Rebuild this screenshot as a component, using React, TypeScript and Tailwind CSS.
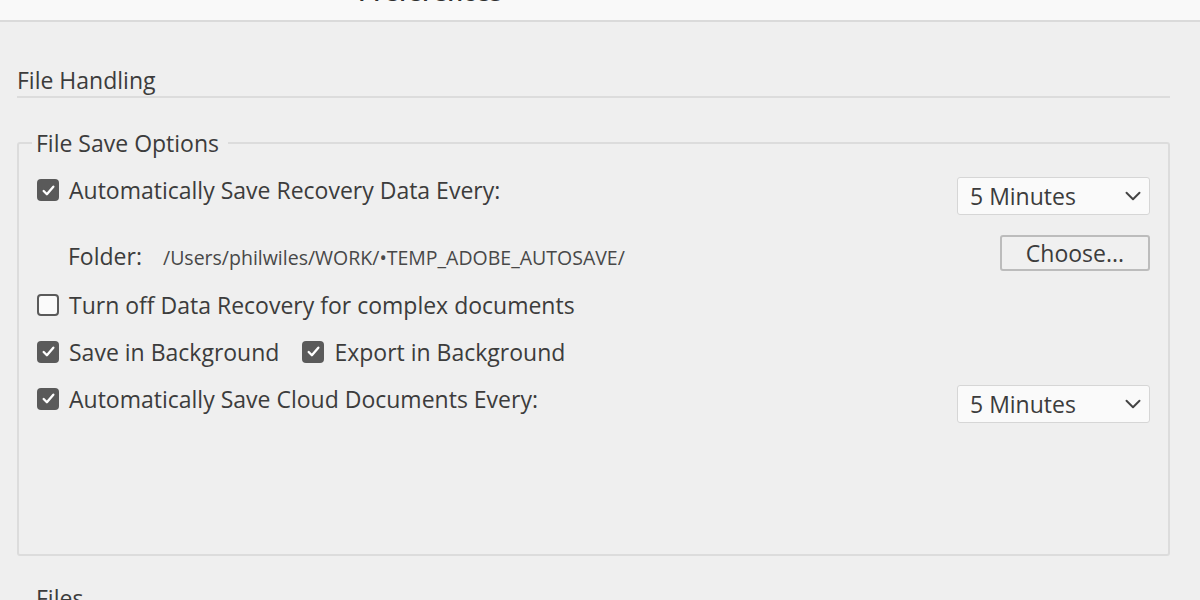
import { ChevronDown } from 'lucide-react';

const font = { fontFamily: '"Open Sans", "Liberation Sans", sans-serif' };

function Check({ on }: { on: boolean }) {
  if (!on) {
    return <span className="w-[22px] h-[22px] rounded-[4px] border-2 border-[#5a5a5a] bg-[#fafafa] shrink-0" />;
  }
  return (
    <span className="w-[22px] h-[22px] rounded-[4px] bg-[#5a5a5a] flex items-center justify-center shrink-0">
      <svg width="15" height="15" viewBox="0 0 14 14" fill="none">
        <path d="M2.5 7.5 L5.5 10.5 L11.5 3.5" stroke="#fff" strokeWidth="2.2" strokeLinecap="round" strokeLinejoin="round" />
      </svg>
    </span>
  );
}

function Option({ on, label }: { on: boolean; label: string }) {
  return (
    <label className="flex items-center gap-[10px] h-[24px]">
      <Check on={on} />
      <span className="text-[23px] leading-[28px] text-[#3c3c3c] whitespace-nowrap">{label}</span>
    </label>
  );
}

function Select({ value }: { value: string }) {
  return (
    <div className="w-[193px] h-[38px] bg-[#fafafa] border border-[#d6d6d6] rounded-[3px] flex items-center justify-between pl-[12px] pr-[3px]">
      <span className="text-[23px] leading-[28px] text-[#3c3c3c]">{value}</span>
      <ChevronDown className="w-[26px] h-[26px] text-[#444]" strokeWidth={1.8} />
    </div>
  );
}

export default function App() {
  return (
    <div className="w-[1200px] h-[600px] overflow-hidden bg-[#efefef]" style={font}>
      {/* window title bar, scrolled off the top */}
      <div className="h-[22px] bg-[#f9f9f9] border-b-2 border-[#dadada] overflow-hidden flex pl-[358px]">
        <span className="text-[25px] leading-[30px] -mt-[24px] text-[#2e2e2e] font-semibold">Preferences</span>
      </div>

      <div className="pl-[17px] pr-[30px]">
        <h2 className="mt-[44px] text-[23px] leading-[28px] text-[#3c3c3c]">File Handling</h2>
        <div className="mt-[2px] border-b-2 border-[#dcdcdc]" />

        <fieldset className="mt-[31px] h-[427px] border-2 border-[#dcdcdc] rounded-[3px]">
          <legend className="ml-[13px] pl-[4px] pr-[9px] text-[23px] leading-[28px] text-[#3c3c3c]">File Save Options</legend>

          <div className="px-[18px]">
            <div className="mt-[20px] flex justify-between items-start">
              <div className="mt-[1px]">
                <Option on label="Automatically Save Recovery Data Every:" />
              </div>
              <Select value="5 Minutes" />
            </div>

            <div className="mt-[18px] flex justify-between items-center">
              <div className="flex items-baseline pl-[31px] pt-[6px] text-[#3c3c3c]">
                <span className="text-[23px] w-[95px]">Folder:</span>
                <span className="text-[19.5px] text-[#484848]">/Users/philwiles/WORK/•TEMP_ADOBE_AUTOSAVE/</span>
              </div>
              <button className="w-[150px] h-[36px] border-2 border-[#bcbcbc] rounded-[3px] bg-[#f0f0f0] text-[23px] leading-[28px] text-[#3c3c3c]">
                Choose...
              </button>
            </div>

            <div className="mt-[19px]">
              <Option on={false} label="Turn off Data Recovery for complex documents" />
            </div>

            <div className="mt-[23px] flex gap-[23px]">
              <Option on label="Save in Background" />
              <Option on label="Export in Background" />
            </div>

            <div className="mt-[21px] flex justify-between items-start">
              <div className="mt-[2px]">
                <Option on label="Automatically Save Cloud Documents Every:" />
              </div>
              <Select value="5 Minutes" />
            </div>
          </div>
        </fieldset>

        <div className="mt-[28px] pl-[19px] text-[23px] leading-[28px] text-[#3c3c3c]">Files</div>
      </div>
    </div>
  );
}
